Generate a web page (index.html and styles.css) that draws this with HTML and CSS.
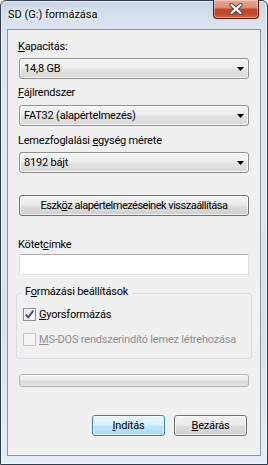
FILE: index.html
```html
<!DOCTYPE html>
<html lang="hu">
<head>
<meta charset="utf-8">
<title>SD (G:) formázása</title>
<link rel="stylesheet" href="styles.css">
</head>
<body>
<div class="window">
  <div class="titlebar">
    <span class="title">SD (G:) formázása</span>
    <button class="close" aria-label="Bezárás">
      <svg width="14" height="12" viewBox="0 0 14 12">
        <path d="M2.5 2 L11.5 10 M11.5 2 L2.5 10" stroke="#4d4d4d" stroke-width="4.2" stroke-linecap="round" fill="none"/>
        <path d="M2.5 2 L11.5 10 M11.5 2 L2.5 10" stroke="#ffffff" stroke-width="2.2" stroke-linecap="round" fill="none"/>
      </svg>
    </button>
  </div>
  <div class="client">
    <div class="label lbl-cap"><u>K</u>apacitás:</div>
    <div class="combo combo-cap"><span>14,8 GB</span><svg class="arrow" width="7" height="4" viewBox="0 0 7 4"><polygon points="0,0 7,0 3.5,4" fill="#000"/></svg></div>

    <div class="label lbl-fs"><u>F</u>ájlrendszer</div>
    <div class="combo combo-fs"><span>FAT32 (alapértelmezés)</span><svg class="arrow" width="7" height="4" viewBox="0 0 7 4"><polygon points="0,0 7,0 3.5,4" fill="#000"/></svg></div>

    <div class="label lbl-au">Lemezfoglalási <u>e</u>gység mérete</div>
    <div class="combo combo-au"><span>8192 bájt</span><svg class="arrow" width="7" height="4" viewBox="0 0 7 4"><polygon points="0,0 7,0 3.5,4" fill="#000"/></svg></div>

    <button class="btn btn-restore">Eszk<u>ö</u>z alapértelmezéseinek visszaállítása</button>

    <div class="label lbl-vol">Kötet<u>c</u>ímke</div>
    <div class="textbox"></div>

    <fieldset class="group">
      <legend>F<u>o</u>rmázási beállítások</legend>
      <div class="check-row">
        <span class="checkbox">
          <svg width="11" height="11" viewBox="0 0 11 11"><path d="M1.8 5.6 L4.2 8.4 L9.4 1.6" stroke="#3b5290" stroke-width="2" fill="none" stroke-linejoin="round"/></svg>
        </span>
        <span><u>G</u>yorsformázás</span>
      </div>
      <div class="check-row disabled">
        <span class="checkbox"></span>
        <span><u>M</u>S-DOS rendszerindító lemez létrehozása</span>
      </div>
    </fieldset>

    <div class="progress"></div>

    <div class="actions">
      <button class="btn btn-default"><u>I</u>ndítás</button>
      <button class="btn"><u>B</u>ezárás</button>
    </div>
  </div>
</div>
</body>
</html>
```
FILE: styles.css
```css
* { box-sizing: border-box; }
html, body { margin: 0; padding: 0; }
body {
  width: 268px;
  height: 465px;
  overflow: hidden;
  background: #ffffff;
  font-family: Roboto, "Noto Sans", sans-serif;
  font-size: 11px;
  line-height: 15px;
  letter-spacing: -0.2px;
  color: #000;
}
u { text-decoration: underline; text-underline-offset: 1px; }

.window {
  width: 268px;
  height: 465px;
  border: 1px solid #323b4b;
  border-radius: 6px 6px 0 0;
  padding: 0 6px 8px;
  display: flex;
  flex-direction: column;
  background: linear-gradient(to bottom, #cad6e5 0, #dbe4ef 26px, #e0e8f2 150px, #d8e1eb 320px, #e5edf6 100%);
  box-shadow: inset 0 0 0 1px rgba(255,255,255,.55);
}

.titlebar {
  height: 28px;
  flex: none;
  display: flex;
  align-items: flex-start;
  justify-content: space-between;
}
.title {
  margin: 6px 0 0 1px;
  letter-spacing: 0;
  text-shadow: 0 0 4px #fff, 0 0 7px #fff, 0 0 10px rgba(255,255,255,.9);
}
.close {
  width: 46px;
  height: 19px;
  margin: -1px 2px 0 0;
  padding: 0;
  border: 1px solid #4e1d12;
  border-top: none;
  border-radius: 0 0 4px 4px;
  background: linear-gradient(to bottom, #e8a897 0%, #de8c76 42%, #c4462c 52%, #c3472d 78%, #d56b4c 100%);
  box-shadow: inset 0 0 0 1px rgba(255,255,255,.35);
  display: flex;
  align-items: center;
  justify-content: center;
}

.client {
  flex: 1;
  border: 1px solid #8b95a1;
  background: #f0f0f0;
  padding: 9px 11px 0;
  display: flex;
  flex-direction: column;
}

.label { margin-left: -1px; height: 15px; }
.lbl-fs { margin-top: 6px; }
.lbl-au { margin-top: 7px; }
.lbl-vol { margin-top: 21px; }

.combo {
  height: 21px;
  flex: none;
  display: flex;
  align-items: center;
  justify-content: space-between;
  padding: 0 4px 0 4px;
  border: 1px solid #8e8f8f;
  border-radius: 3px;
  background: linear-gradient(to bottom, #f4f4f4 0%, #eeeeee 45%, #e2e2e2 55%, #d8d8d8 100%);
  box-shadow: inset 0 0 0 1px rgba(255,255,255,.75);
}
.combo-cap { margin-top: 4px; }
.combo-fs { margin-top: 5px; }
.combo-au { margin-top: 4px; }
.arrow { display: block; }

.btn {
  font: inherit;
  letter-spacing: inherit;
  color: #000;
  height: 21px;
  padding: 0;
  border: 1px solid #707070;
  border-radius: 3px;
  background: linear-gradient(to bottom, #f2f2f2 0%, #ebebeb 48%, #dddddd 52%, #cfcfcf 100%);
  box-shadow: inset 0 0 0 1px rgba(255,255,255,.7);
  display: flex;
  align-items: center;
  justify-content: center;
}
.btn-restore { margin-top: 22px; width: 100%; letter-spacing: -0.5px; }

.textbox {
  margin-top: 2px;
  height: 21px;
  flex: none;
  background: #fff;
  border: 1px solid #dbdfe6;
  border-top-color: #abadb3;
  border-radius: 2px;
}

.group {
  margin: 9px -3px 0;
  padding: 4px 6px 11px;
  border: 1px solid #d5dfe5;
  border-radius: 3px;
  min-width: 0;
  display: flex;
  flex-direction: column;
  gap: 10px;
}
.group legend {
  margin-left: -2px;
  padding: 0 4px 4px;
  line-height: 15px;
}

.check-row {
  height: 15px;
  display: flex;
  align-items: center;
  gap: 3px;
  white-space: nowrap;
}
.checkbox {
  width: 13px;
  height: 13px;
  flex: none;
  border: 1px solid #8e8f8f;
  background: linear-gradient(135deg, #dcdcdc 0%, #f2f2f2 55%, #ffffff 100%);
  box-shadow: inset 0 0 0 1px #f4f4f4;
  display: flex;
  align-items: center;
  justify-content: center;
}
.disabled { color: #8d8d8d; }
.disabled .checkbox {
  border-color: #c5c5c5;
  background: #f4f4f4;
  box-shadow: none;
}

.progress {
  margin-top: 15px;
  height: 13px;
  flex: none;
  border: 1px solid #b2b2b2;
  border-radius: 3px;
  background: linear-gradient(to bottom, #f3f3f3 0%, #ececec 40%, #dbdbdb 60%, #e3e3e3 100%);
  box-shadow: inset 0 1px 0 #fff;
}

.actions {
  margin-top: 28px;
  display: flex;
  justify-content: flex-end;
  gap: 9px;
  padding-right: 2px;
}
.actions .btn { width: 73px; }
.btn-default {
  border-color: #3c7fb1;
  background: linear-gradient(to bottom, #eaf6fd 0%, #d9f0fc 48%, #bee6fd 52%, #a7d9f5 100%);
  box-shadow: inset 0 0 0 1px rgba(255,255,255,.6);
}
```
